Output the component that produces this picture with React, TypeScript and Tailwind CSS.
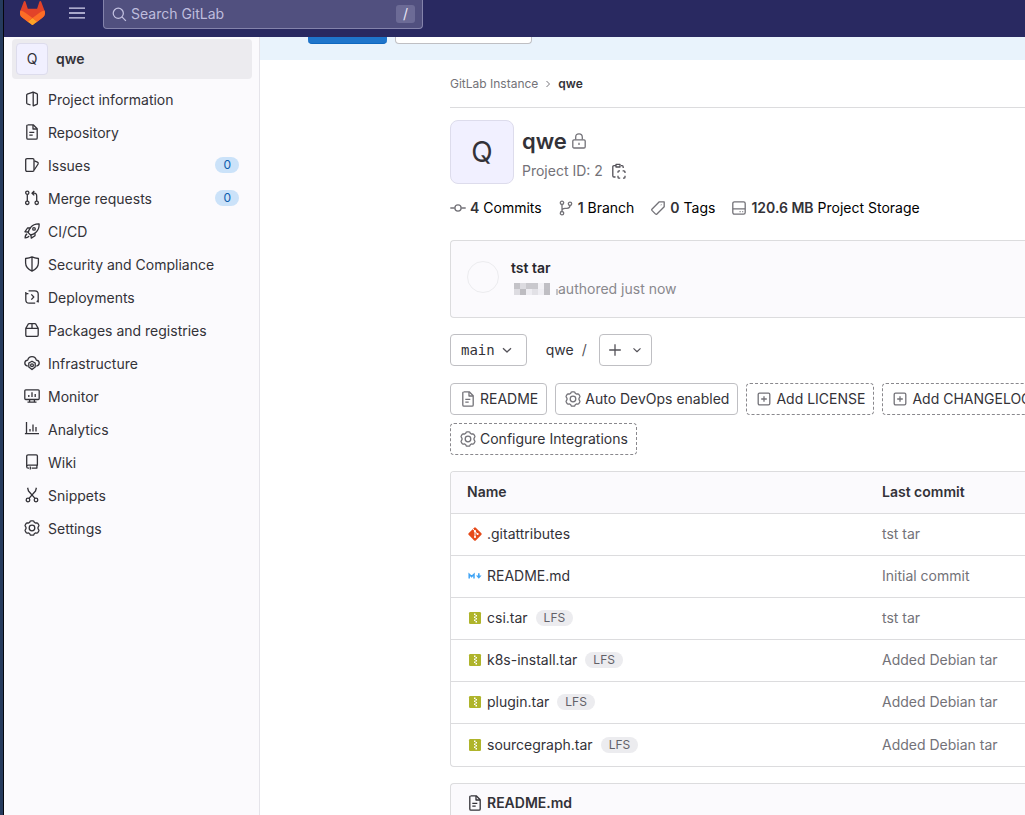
import React from 'react';

type IconProps = { name: string; className?: string };

const shapes: Record<string, React.ReactNode> = {
  project: (
    <>
      <path d="M9.2 1.2 L12.8 2.6 Q13.4 2.8 13.4 3.5 V12.5 Q13.4 13.2 12.8 13.4 L9.2 14.8 Z" />
      <path d="M9.2 1.2 L3.2 3.2 Q2.7 3.5 2.7 4 V12 Q2.7 12.5 3.2 12.8 L6.6 14" />
    </>
  ),
  doc: (
    <>
      <path d="M3.7.8 H9.2 L13.2 4.8 V14 Q13.2 15.2 12 15.2 H4 Q2.8 15.2 2.8 14 V2 Q2.8.8 4 .8" />
      <path d="M9 1 V5 H13 M5.3 8.3 H10.3 M5.3 11.2 H8.7" />
    </>
  ),
  issues: (
    <>
      <path d="M3 1.7 H8.8 Q10 1.7 10 2.9 V13 Q10 14.3 8.8 14.3 H3 Q1.7 14.3 1.7 13 V3 Q1.7 1.7 3 1.7Z" />
      <path d="M10.3 3.9 L13.4 5.2 Q14.6 5.8 14.1 7 L10.2 13" />
    </>
  ),
  merge: (
    <>
      <circle cx="3.3" cy="2.7" r="1.6" />
      <circle cx="3.3" cy="12.8" r="1.7" />
      <circle cx="12.7" cy="12.8" r="1.7" />
      <path d="M3.3 4.4 V11 M12.7 11 V6 Q12.7 3.2 10.2 3.2 H8.3 M10.3 1 L8 3.2 L10.3 5.4" />
    </>
  ),
  rocket: (
    <>
      <path d="M15.1.9 Q9.6.7 6.9 4.2 Q4.7 7 4.2 9.6 L6.6 12 Q9.4 11.5 12 9.2 Q15.4 6.2 15.1.9Z" />
      <circle cx="10" cy="5.9" r="1.3" />
      <path d="M6.3 5 H3.5 L.9 8.8 L4.4 9 M11 10.2 V12.7 L7.3 15.1 L6.9 11.9 M3.2 11 Q1.2 11.5 1.1 14.9 Q4.4 14.8 5 12.9" />
    </>
  ),
  shield: (
    <>
      <path d="M8 .9 Q10.5 2.2 14.4 2.5 V7 Q14.3 12.3 8 15.1 Q1.7 12.3 1.6 7 V2.5 Q5.5 2.2 8 .9Z M8 1 V15" />
    </>
  ),
  deploy: (
    <>
      <path d="M4.6 1.8 H10.8 Q14.2 1.8 14.2 5 V10.8 Q14.2 12.4 12.6 12.7 M11.2 14.2 H5.2 Q1.8 14.2 1.8 10.8 V6 Q1.8 4.7 3 4.7 H4.4 M1.8 2.9 V6 M14.2 9.9 V13.6" />
      <path d="M7.3 5.4 L9.8 8 L7.3 10.6" />
    </>
  ),
  package: (
    <>
      <path d="M1.8 6.3 L4.3 2 Q4.6 1.6 5.1 1.6 H10.9 Q11.4 1.6 11.7 2 L14.2 6.3 V13 Q14.2 14.3 13 14.3 H3 Q1.8 14.3 1.8 13Z M1.8 6.4 H14.2 M8 1.7 V6.2" />
    </>
  ),
  cloud: (
    <>
      <path d="M3.8 11.1 Q.8 10.7.8 8.1 Q.8 5.5 3.7 5.2 Q4.6 1.6 8 1.6 Q11.5 1.6 12.3 5.2 Q15.2 5.5 15.2 8.1 Q15.2 10.7 12.3 11.1" />
      <path d="M8 6.2 L11.2 8 V12 L8 14.6 L4.8 12 V8Z" />
      <circle cx="8" cy="10.3" r="1.4" />
    </>
  ),
  monitor: (
    <>
      <rect x=".8" y="1.8" width="14.4" height="9.7" rx="1" />
      <path d="M4.8 7 V9 M8 4.3 V9 M11.2 6 V9 M5.6 11.7 V14 M10.4 11.7 V14 M3.5 14.2 H12.5" />
    </>
  ),
  chart: <path d="M2.5 1 V13.2 M.9 12.7 H15 M6 8 V10.5 M9 3.5 V10.5 M12 6 V10.5" />,
  book: (
    <>
      <path d="M4.2.8 H12.3 Q13.4.8 13.4 1.9 V11.2 H4.3 Q2.7 11.2 2.7 12.7 Q2.7 14.2 4.3 14.2 H5 M7.6 14.2 H13.4 M2.7 12.6 V2.3 Q2.7.8 4.2.8 M12.9 11.2 V14 M6.3 12.5 V15.6" />
    </>
  ),
  scissors: (
    <>
      <circle cx="4" cy="13" r="1.8" />
      <circle cx="12" cy="13" r="1.8" />
      <path d="M3.6.8 L4.5 4 L11 11.4 M12.4.8 L11.5 4 L5 11.4" />
    </>
  ),
  gear: (
    <>
      <path d="M6.2 1.2 Q6.5.8 7 .8 H9 Q9.5.8 9.8 1.2 L10.4 2.5 L11.4 3 L12.9 2.9 Q13.5 2.9 13.8 3.4 L14.8 5 Q15.1 5.5 14.8 6 L14 7.4 V8.6 L14.8 10 Q15.1 10.5 14.8 11 L13.8 12.6 Q13.5 13.1 12.9 13.1 L11.4 13 L10.4 13.5 L9.8 14.8 Q9.5 15.2 9 15.2 H7 Q6.5 15.2 6.2 14.8 L5.6 13.5 L4.6 13 L3.1 13.1 Q2.5 13.1 2.2 12.6 L1.2 11 Q.9 10.5 1.2 10 L2 8.6 V7.4 L1.2 6 Q.9 5.5 1.2 5 L2.2 3.4 Q2.5 2.9 3.1 2.9 L4.6 3 L5.6 2.5Z" />
      <circle cx="8" cy="8" r="2.8" />
    </>
  ),
  menu: <path d="M0 3.2 H16 M0 8 H16 M0 12.8 H16" />,
  search: (
    <>
      <circle cx="6.7" cy="6.7" r="5.4" />
      <path d="M10.6 10.6 L14.8 14.8" />
    </>
  ),
  chevronRight: <path d="M6 4 L10 8 L6 12" />,
  chevronDown: <path d="M4 6.2 L8 10 L12 6.2" />,
  plus: <path d="M8 2.2 V13.8 M2.2 8 H13.8" />,
  plusSquare: (
    <>
      <rect x="2.2" y="2.2" width="11.6" height="11.6" rx="1.3" />
      <path d="M8 5.2 V10.8 M5.2 8 H10.8" />
    </>
  ),
  lock: (
    <>
      <rect x="1.8" y="6.8" width="12.4" height="8.2" rx="1.2" />
      <path d="M4.7 6.6 V4.2 Q4.7 .8 8 .8 Q11.3 .8 11.3 4.2 V6.6 M8 9.7 V12" />
    </>
  ),
  paste: (
    <>
      <path d="M5 2.7 H3 Q1.8 2.7 1.8 3.9 V12.8 Q1.8 14 3 14 H4.5 M10 2.7 H11 Q12.2 2.7 12.2 3.9 V5 M5 1.3 H9 V4 H5Z" />
      <path d="M7 9.8 V8.8 Q7 7.8 8 7.8 H9 M11.6 7.8 H12.9 Q14 7.8 14 8.9 V10 M14 12.7 V14 Q14 15.2 12.9 15.2 H12 M9.2 15.2 H8 Q7 15.2 7 14 V12.7" />
    </>
  ),
  commit: (
    <>
      <circle cx="8" cy="8" r="3.1" />
      <path d="M.3 8 H4.8 M11.2 8 H15.7" />
    </>
  ),
  branch: (
    <>
      <circle cx="4" cy="2.8" r="1.7" />
      <circle cx="4" cy="13.2" r="1.7" />
      <circle cx="12" cy="3.8" r="1.7" />
      <path d="M4 4.6 V11.4 M12 5.6 Q12 8.4 9 8.4 H7 Q4 8.4 4 11" />
    </>
  ),
  tag: (
    <>
      <path d="M9.3 1.8 H14.2 V6.7 L6.7 14.2 Q6.2 14.6 5.6 14.1 L1.9 10.4 Q1.4 9.8 1.9 9.2Z" />
      <path d="M10.9 4.6 L11.4 5.1" />
    </>
  ),
  disk: (
    <>
      <rect x="1.8" y="1.8" width="12.4" height="12.4" rx="1.6" />
      <path d="M2 8.8 H14 M8.6 11.6 H9.6 M11.3 11.6 H12.2" />
    </>
  ),
};

function Icon({ name, className = 'size-4' }: IconProps) {
  return (
    <svg
      viewBox="0 0 16 16"
      className={`shrink-0 ${className}`}
      fill="none"
      stroke="currentColor"
      strokeWidth="1.3"
      strokeLinejoin="round"
      aria-hidden="true"
    >
      {shapes[name]}
    </svg>
  );
}

function Tanuki() {
  return (
    <svg viewBox="0 0 25 24" className="mt-px h-6 w-[25px] shrink-0" aria-hidden="true">
      <path fill="#E24329" d="m24.507 9.5-.034-.09L21.082.562a.896.896 0 0 0-1.694.091l-2.29 7.01H7.825L5.535.653a.898.898 0 0 0-1.694-.09L.451 9.411.416 9.5a6.297 6.297 0 0 0 2.09 7.278l.012.01.03.022 5.16 3.867 2.56 1.935 1.554 1.176a1.051 1.051 0 0 0 1.268 0l1.555-1.176 2.56-1.935 5.197-3.89.014-.01A6.297 6.297 0 0 0 24.507 9.5Z" />
      <path fill="#FC6D26" d="m24.507 9.5-.034-.09a11.44 11.44 0 0 0-4.56 2.051l-7.447 5.632 4.742 3.584 5.197-3.89.014-.01A6.297 6.297 0 0 0 24.507 9.5Z" />
      <path fill="#FCA326" d="m7.707 20.677 2.56 1.935 1.555 1.176a1.051 1.051 0 0 0 1.268 0l1.555-1.176 2.56-1.935-4.743-3.584-4.755 3.584Z" />
      <path fill="#FC6D26" d="M5.01 11.461a11.43 11.43 0 0 0-4.56-2.05L.416 9.5a6.297 6.297 0 0 0 2.09 7.278l.012.01.03.022 5.16 3.867 4.745-3.584-7.444-5.632Z" />
    </svg>
  );
}

function FileIcon({ kind }: { kind: string }) {
  if (kind === 'git') {
    return (
      <svg viewBox="0 0 16 16" className="size-4 shrink-0" aria-hidden="true">
        <path fill="#e64a19" d="M7.2 1.7 Q8 1 8.8 1.7 L14.4 7.2 Q15.1 8 14.4 8.8 L8.8 14.4 Q8 15 7.2 14.4 L1.6 8.8 Q.9 8 1.6 7.2Z" />
        <path stroke="#fff" strokeWidth="1" fill="none" d="M6 3 L8 5.2 V11 M8 5.5 L10.6 8" />
        <circle cx="8" cy="5.2" r="1.1" fill="#fff" />
        <circle cx="8" cy="11" r="1.1" fill="#fff" />
        <circle cx="10.6" cy="8" r="1.1" fill="#fff" />
      </svg>
    );
  }
  if (kind === 'md') {
    return (
      <svg viewBox="0 0 16 16" className="size-4 shrink-0" aria-hidden="true">
        <path fill="none" stroke="#42a5f5" strokeWidth="1.5" d="M2.2 10.6 V6.2 L4.6 8.6 L7 6.2 V10.6" />
        <path fill="#42a5f5" d="M11 5.2 H12.6 V7.6 H14.6 L11.8 10.8 L9 7.6 H11Z" />
      </svg>
    );
  }
  return (
    <svg viewBox="0 0 16 16" className="size-4 shrink-0" aria-hidden="true">
      <rect x="2" y="2" width="12" height="12" rx="1.2" fill="#afb42b" />
      <path fill="#fff" d="M7 3.4h1.5v1.5H7z M8.5 4.9H10v1.5H8.5z M7 6.4h1.5v1.5H7z M8.5 7.9H10v1.5H8.5z M7 9.4h1.5v1.5H7z M8.5 10.9H10v1.5H8.5z" />
    </svg>
  );
}

const nav = [
  { icon: 'project', label: 'Project information' },
  { icon: 'doc', label: 'Repository' },
  { icon: 'issues', label: 'Issues', count: 0 },
  { icon: 'merge', label: 'Merge requests', count: 0 },
  { icon: 'rocket', label: 'CI/CD' },
  { icon: 'shield', label: 'Security and Compliance' },
  { icon: 'deploy', label: 'Deployments' },
  { icon: 'package', label: 'Packages and registries' },
  { icon: 'cloud', label: 'Infrastructure' },
  { icon: 'monitor', label: 'Monitor' },
  { icon: 'chart', label: 'Analytics' },
  { icon: 'book', label: 'Wiki' },
  { icon: 'scissors', label: 'Snippets' },
  { icon: 'gear', label: 'Settings' },
];

const stats = [
  { icon: 'commit', value: '4', label: 'Commits' },
  { icon: 'branch', value: '1', label: 'Branch' },
  { icon: 'tag', value: '0', label: 'Tags' },
  { icon: 'disk', value: '120.6 MB', label: 'Project Storage' },
];

const files = [
  { kind: 'git', name: '.gitattributes', commit: 'tst tar', lfs: false },
  { kind: 'md', name: 'README.md', commit: 'Initial commit', lfs: false },
  { kind: 'zip', name: 'csi.tar', commit: 'tst tar', lfs: true },
  { kind: 'zip', name: 'k8s-install.tar', commit: 'Added Debian tar', lfs: true },
  { kind: 'zip', name: 'plugin.tar', commit: 'Added Debian tar', lfs: true },
  { kind: 'zip', name: 'sourcegraph.tar', commit: 'Added Debian tar', lfs: true },
];

function Chip({ icon, label, dashed = false }: { icon: string; label: string; dashed?: boolean }) {
  return (
    <a
      href="#"
      className={`flex h-8 shrink-0 items-center gap-1 whitespace-nowrap rounded border pl-[9px] pr-2 ${
        dashed ? 'border-dashed border-[#89888d]' : 'border-[#bfbfc3]'
      }`}
    >
      <Icon name={icon} className="size-4 text-[#737278]" />
      {label}
    </a>
  );
}

// Blurred-out author name: x, y, width, colour
const mosaic = [
  [0, 0, 6, '#c4c3c8'], [6, 0, 6, '#dcdbe0'], [12, 0, 6, '#c9c8cd'], [18, 0, 6, '#c9c8cd'], [24, 0, 6, '#f3f2f6'], [30, 0, 6, '#c0bfc4'],
  [0, 6, 6, '#dddce1'], [6, 6, 6, '#bdbcc1'], [12, 6, 6, '#eeedf2'], [18, 6, 6, '#e2e1e6'], [24, 6, 6, '#efeef3'], [30, 6, 6, '#bfbec3'], [42, 6, 3, '#c4c3c8'],
] as const;

export default function App() {
  return (
    <div className="flex min-h-screen overflow-hidden bg-white font-['Inter',sans-serif] text-sm leading-5 text-[#333238]">
      <div className="w-1 shrink-0 border-r border-[#05070d] bg-[#263b5e]" />
      <div className="flex min-w-0 flex-1 flex-col">
        <header className="flex h-[37px] shrink-0 items-start bg-[#292961] pl-4">
          <a href="#" aria-label="GitLab">
            <Tanuki />
          </a>
          <button type="button" aria-label="Menu" className="ml-6 mt-[5px] text-[#d5d4ee]">
            <Icon name="menu" />
          </button>
          <label className="ml-[18px] flex h-[29px] w-80 items-center rounded-b border border-t-0 border-[#8483ab] bg-[#51507f] pl-2 pr-[7px] text-[#c4c2e2]">
            <Icon name="search" className="size-[15px]" />
            <input
              type="text"
              aria-label="Search GitLab"
              placeholder="Search GitLab"
              className="ml-1 min-w-0 flex-1 bg-transparent outline-none placeholder:text-[#bfbddd]"
            />
            <kbd className="flex h-[18px] w-[19px] items-center justify-center rounded-[3px] bg-[#6c6b96] font-['Inter',sans-serif] text-sm text-[#e8e7f7]">
              /
            </kbd>
          </label>
        </header>

        <div className="flex min-h-0 flex-1">
          <aside className="w-64 shrink-0 border-r border-[#e5e4ea] bg-[#fbfafd] pl-2 pr-[7px] pt-0.5">
            <a href="#" className="flex h-10 items-center gap-2 rounded bg-[#ecebef] pl-1 font-semibold">
              <span className="flex size-8 items-center justify-center rounded border border-[#dddcec] bg-[#f1f0ff] font-normal">
                Q
              </span>
              qwe
            </a>
            <nav className="mt-1">
              {nav.map((item) => (
                <a key={item.label} href="#" className="flex h-[33px] items-center gap-2 pl-3 pr-[13px]">
                  <Icon name={item.icon} className="mb-0.5 size-4" />
                  <span className="flex-1">{item.label}</span>
                  {item.count !== undefined && (
                    <span className="mb-0.5 flex h-4 items-center rounded-full bg-[#cbe2f9] px-2 text-xs leading-4 text-[#0b5cad]">
                      {item.count}
                    </span>
                  )}
                </a>
              ))}
            </nav>
          </aside>

          <main className="min-w-0 flex-1 overflow-hidden">
            <div className="flex h-[23px] items-start gap-2 bg-[#e9f3fc] pl-12">
              <button type="button" aria-label="Accept" className="h-[7px] w-[79px] rounded-b border-b border-[#1068bf] bg-[#1f75cb]" />
              <button type="button" aria-label="Dismiss" className="h-[7px] w-[137px] rounded-b border border-t-0 border-[#bfbfc3] bg-white" />
            </div>

            <div className="pl-[190px]">
              <nav aria-label="Breadcrumb" className="flex h-12 items-center gap-1 border-b border-[#dcdcde] text-xs text-[#737278]">
                <a href="#">GitLab Instance</a>
                <Icon name="chevronRight" className="size-3" />
                <a href="#" className="font-semibold text-[#333238]">qwe</a>
              </nav>

              <section className="mt-3 flex h-16 gap-2">
                <div className="flex size-16 shrink-0 items-center justify-center rounded-lg border border-[#dddcec] bg-[#f1f0ff] text-[28px]">
                  Q
                </div>
                <div className="flex flex-col">
                  <h1 className="flex h-[42px] items-center gap-1 text-[22px] font-semibold">
                    qwe
                    <Icon name="lock" className="size-4 text-[#737278]" />
                  </h1>
                  <div className="flex h-[18px] items-center text-[#737278]">
                    Project ID: 2
                    <button type="button" aria-label="Copy project ID" className="ml-2 text-[#535158]">
                      <Icon name="paste" />
                    </button>
                  </div>
                </div>
              </section>

              <div className="mt-3.5 flex h-5 gap-4 whitespace-nowrap text-black">
                {stats.map((s) => (
                  <a key={s.label} href="#" className="flex items-center gap-1">
                    <Icon name={s.icon} className="size-4 text-[#737278]" />
                    <span>
                      <strong className="font-semibold text-[#333238]">{s.value}</strong> {s.label}
                    </span>
                  </a>
                ))}
              </div>

              <section className="mt-[22px] flex h-[78px] items-start rounded-l border border-r-0 border-[#dcdcde] bg-[#fbfafd] pl-4 pt-[17px]">
                <div className="mt-[3px] size-8 rounded-full border border-[#ececef]" />
                <div className="ml-3 flex flex-col gap-px">
                  <a href="#" className="block font-semibold text-[#28272d]">tst tar</a>
                  <div className="flex items-center text-[#89888d]">
                    <svg width="47" height="12" className="pl-[3px]" shapeRendering="crispEdges" aria-hidden="true">
                      {mosaic.map(([x, y, w, fill]) => (
                        <rect key={`${x}-${y}`} x={x} y={y} width={w} height="6" fill={fill} />
                      ))}
                    </svg>
                    authored just now
                  </div>
                </div>
              </section>

              <div className="mt-4 flex items-center">
                <button type="button" className="flex h-8 items-center gap-1 rounded border border-[#bfbfc3] pl-2.5 pr-[11px] font-['DejaVu_Sans_Mono',monospace]">
                  main
                  <Icon name="chevronDown" className="size-4 text-[#535158]" />
                </button>
                <a href="#" className="ml-[19px]">qwe</a>
                <span className="ml-2 text-[#535158]">/</span>
                <button type="button" aria-label="Add to tree" className="ml-3 flex h-8 items-center gap-[7px] rounded border border-[#bfbfc3] px-[7px] text-[#535158]">
                  <Icon name="plus" />
                  <Icon name="chevronDown" className="size-3.5" />
                </button>
              </div>

              <div className="mt-[17px] flex gap-2">
                <Chip icon="doc" label="README" />
                <Chip icon="gear" label="Auto DevOps enabled" />
                <Chip icon="plusSquare" label="Add LICENSE" dashed />
                <Chip icon="plusSquare" label="Add CHANGELOG" dashed />
              </div>
              <div className="mt-2 flex gap-2">
                <Chip icon="gear" label="Configure Integrations" dashed />
              </div>

              <div className="mt-4 overflow-hidden rounded-l border border-r-0 border-[#dcdcde]">
                <table className="w-full text-left">
                  <thead className="bg-[#fbfafd]">
                    <tr className="h-[41px] border-b border-[#dcdcde]">
                      <th className="w-[415px] px-4 font-semibold">Name</th>
                      <th className="whitespace-nowrap pl-4 font-semibold">Last commit</th>
                    </tr>
                  </thead>
                  <tbody>
                    {files.map((f) => (
                      <tr key={f.name} className="h-[42px] border-b border-[#dcdcde] last:h-[43px] last:border-b-0">
                        <td className="px-4">
                          <div className="flex items-center gap-1">
                            <FileIcon kind={f.kind} />
                            <a href="#">{f.name}</a>
                            {f.lfs && (
                              <span className="ml-1 flex h-4 items-center rounded-full bg-[#ececef] px-2 text-xs leading-4 text-[#626168]">
                                LFS
                              </span>
                            )}
                          </div>
                        </td>
                        <td className="whitespace-nowrap pl-4 text-[#737278]">
                          <a href="#">{f.commit}</a>
                        </td>
                      </tr>
                    ))}
                  </tbody>
                </table>
              </div>

              <section className="mt-4 rounded-tl border border-b-0 border-r-0 border-[#dcdcde] bg-[#fbfafd]">
                <h2 className="flex h-8 items-center gap-1 pl-4 pt-1.5 font-semibold">
                  <Icon name="doc" />
                  README.md
                </h2>
              </section>
            </div>
          </main>
        </div>
      </div>
    </div>
  );
}
